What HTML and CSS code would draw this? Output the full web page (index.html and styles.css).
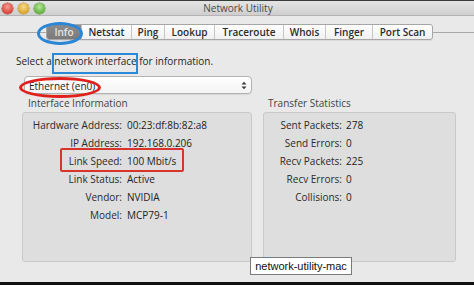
FILE: index.html
```html
<!DOCTYPE html>
<html>
<head>
<meta charset="utf-8">
<link rel="stylesheet" href="styles.css">
</head>
<body>
<div class="window">
  <div class="titlebar">
    <div class="lights">
      <span class="light red"></span>
      <span class="light yellow"></span>
      <span class="light green"></span>
    </div>
    <div class="title">Network Utility</div>
  </div>
  <div class="content">
    <div class="tabrow">
      <div class="rule short"></div>
      <div class="tabs">
        <span class="tab selected">Info</span>
        <span class="tab">Netstat</span>
        <span class="tab">Ping</span>
        <span class="tab">Lookup</span>
        <span class="tab">Traceroute</span>
        <span class="tab">Whois</span>
        <span class="tab">Finger</span>
        <span class="tab">Port Scan</span>
      </div>
      <div class="rule grow"></div>
    </div>
    <p class="prompt">Select a network interface for information.</p>
    <div class="select">
      <span class="select-text">Ethernet (en0)</span>
      <svg class="arrows" width="6" height="9" viewBox="0 0 6 9"><path d="M0.5 3.5 L3 0.8 L5.5 3.5 Z M0.5 5.5 L3 8.2 L5.5 5.5 Z" fill="#3a3a3a"/></svg>
    </div>
    <div class="panels">
      <section class="group iface">
        <h3 class="group-title">Interface Information</h3>
        <div class="box">
          <dl class="grid">
            <dt>Hardware Address:</dt><dd>00:23:df:8b:82:a8</dd>
            <dt>IP Address:</dt><dd>192.168.0.206</dd>
            <dt>Link Speed:</dt><dd>100 Mbit/s</dd>
            <dt>Link Status:</dt><dd>Active</dd>
            <dt>Vendor:</dt><dd>NVIDIA</dd>
            <dt>Model:</dt><dd>MCP79-1</dd>
          </dl>
        </div>
      </section>
      <section class="group stats">
        <h3 class="group-title">Transfer Statistics</h3>
        <div class="box">
          <dl class="grid">
            <dt>Sent Packets:</dt><dd>278</dd>
            <dt>Send Errors:</dt><dd>0</dd>
            <dt>Recv Packets:</dt><dd>225</dd>
            <dt>Recv Errors:</dt><dd>0</dd>
            <dt>Collisions:</dt><dd>0</dd>
          </dl>
        </div>
      </section>
    </div>
  </div>
  <div class="bottombar"></div>

  <div class="mark blue-ellipse"></div>
  <div class="mark blue-rect"></div>
  <div class="mark red-ellipse"></div>
  <div class="mark red-rect"></div>
  <div class="tooltip">network-utility-mac</div>
</div>
</body>
</html>
```
FILE: styles.css
```css
* { box-sizing: border-box; }
html, body { margin: 0; padding: 0; }
body { width: 474px; height: 285px; overflow: hidden; background: #e9e9e9; font-family: "Open Sans", "DejaVu Sans", sans-serif; font-size: 10px; color: #262626; }
.window { position: relative; width: 474px; height: 285px; display: flex; flex-direction: column; background: #e9e9e9; }
.titlebar { height: 16px; flex: none; position: relative; display: flex; align-items: center; border-top: 1px solid #3a3a3a; background: linear-gradient(#e4e4e4, #cfcfcf); border-bottom: 1px solid #b4b4b4; }
.lights { display: flex; gap: 5px; padding-left: 2px; }
.light { width: 11px; height: 11px; border-radius: 50%; display: block; }
.red { background: radial-gradient(circle at 50% 35%, #f79c95, #d8463c 70%); box-shadow: 0 0 0 0.5px #b23a30; }
.yellow { background: radial-gradient(circle at 50% 35%, #f8dc8c, #dba52c 70%); box-shadow: 0 0 0 0.5px #b5872a; }
.green { background: radial-gradient(circle at 50% 35%, #b9e69a, #63b23e 70%); box-shadow: 0 0 0 0.5px #4d8e2e; }
.title { position: absolute; left: 0; right: 0; top: 0; bottom: 0; display: flex; align-items: center; justify-content: center; color: #4a4a4a; font-size: 10px; padding-left: 2px; }
.content { flex: 1; display: flex; flex-direction: column; }
.tabrow { display: flex; align-items: center; margin-top: 8px; height: 16px; }
.rule { height: 1px; background: #a9a9a9; }
.rule.short { width: 46px; }
.rule.grow { flex: 1; }
.tabs { display: flex; height: 16px; border: 1px solid #a6a6a6; border-radius: 3px; background: linear-gradient(#ffffff, #f0f0f0); box-shadow: 0 1px 0 rgba(0,0,0,0.06); overflow: hidden; }
.tab { display: flex; align-items: center; justify-content: center; font-size: 10px; font-weight: 600; color: #2b2b2b; border-left: 1px solid #c6c6c6; padding: 0; white-space: nowrap; }
.tab:first-child { border-left: none; }
.tab:nth-child(1) { width: 34px; }
.tab:nth-child(2) { width: 50px; }
.tab:nth-child(3) { width: 33px; }
.tab:nth-child(4) { width: 50px; }
.tab:nth-child(5) { width: 69px; }
.tab:nth-child(6) { width: 42px; }
.tab:nth-child(7) { width: 47px; }
.tab:nth-child(8) { width: 60px; }
.tab.selected { background: linear-gradient(#8c8c8c, #7a7a7a); color: #e6e6e6; }
.prompt { margin: 14px 0 0 16px; line-height: 14px; height: 14px; }
.select { margin: 8px 0 0 24px; width: 228px; height: 18px; border: 1px solid #b2b2b2; border-radius: 4px; background: linear-gradient(#ffffff, #f3f3f3); box-shadow: 0 1px 1px rgba(0,0,0,0.08); display: flex; align-items: center; justify-content: space-between; padding: 0 4px 0 4px; color: #1e1e1e; }
.select-text { padding-top: 2px; }
.arrows { display: block; }
.panels { display: flex; margin: 3px 0 0 22px; gap: 11px; }
.group { display: flex; flex-direction: column; }
.group-title { margin: 0 0 0 6px; font-size: 10px; font-weight: 400; color: #444; line-height: 13px; height: 15px; }
.box { height: 150px; background: #dedede; border: 1px solid #c9c9c9; border-radius: 3px; padding-top: 3px; }
.iface .box { width: 230px; }
.stats .box { width: 193px; }
.stats .group-title { margin-left: 5px; }
.grid { display: grid; margin: 0; column-gap: 5px; grid-auto-rows: 18px; align-items: center; }
.iface .grid { grid-template-columns: 99px 1fr; }
.stats .grid { grid-template-columns: 78px 1fr; column-gap: 4px; }
.grid dt { text-align: right; color: #2a2a2a; }
.grid dd { margin: 0; color: #222; }
.bottombar { height: 3px; background: #111; flex: none; margin-top: auto; }
.mark { position: absolute; pointer-events: none; }
.blue-ellipse { left: 37px; top: 22px; width: 46px; height: 23px; border: 3px solid #2b87d6; border-radius: 50%; }
.blue-rect { left: 52px; top: 53px; width: 86px; height: 21px; border: 2px solid #2b8ad8; }
.red-ellipse { left: 19px; top: 77px; width: 82px; height: 21px; border: 3px solid #e0201c; border-radius: 50%; }
.red-rect { left: 60px; top: 148px; width: 124px; height: 24px; border: 2px solid #d9342b; border-radius: 2px; }
.tooltip { position: absolute; left: 250px; top: 257px; width: 102px; height: 18px; background: #fff; border: 1px solid #7a7a7a; font-family: "Liberation Sans", Arial, sans-serif; font-size: 11px; color: #111; display: flex; align-items: center; justify-content: center; }
```
